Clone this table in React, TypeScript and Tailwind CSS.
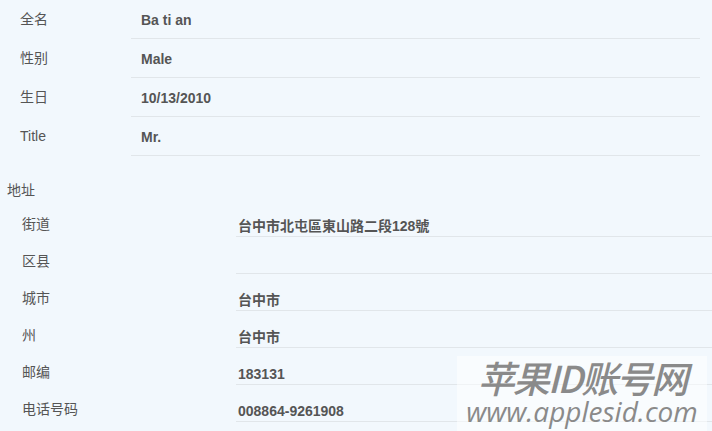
import React from 'react';

const font = { fontFamily: '"Liberation Sans", "Noto Sans CJK SC", Arial, sans-serif' };

const basic = [
  { label: '全名', value: 'Ba ti an' },
  { label: '性别', value: 'Male' },
  { label: '生日', value: '10/13/2010' },
  { label: 'Title', value: 'Mr.' },
];

const address = [
  { label: '街道', value: '台中市北屯區東山路二段128號' },
  { label: '区县', value: '' },
  { label: '城市', value: '台中市' },
  { label: '州', value: '台中市' },
  { label: '邮编', value: '183131' },
  { label: '电话号码', value: '008864-9261908' },
];

export default function App() {
  return (
    <div className="relative w-[712px] h-[431px] overflow-hidden bg-[#f2f8fd] text-[#555]" style={font}>
      {/* Basic info */}
      <div className="flex flex-col pr-[12px]">
        {basic.map((row) => (
          <div key={row.label} className="flex h-[39px]">
            <div className="w-[131px] shrink-0 pl-[20px] pt-[9px] text-[14px] leading-[20px]">{row.label}</div>
            <div className="flex-1 pl-[10px] pt-[10px] text-[14px] leading-[20px] font-bold border-b border-[#e1e6ea]">
              {row.value}
            </div>
          </div>
        ))}
      </div>

      {/* Address */}
      <div className="pl-[7px] pt-[24px] text-[14px] leading-[20px]">地址</div>
      <div className="flex flex-col">
        {address.map((row) => (
          <div key={row.label} className="flex h-[37px]">
            <div className="w-[236px] shrink-0 pl-[22px] pt-[14px] text-[14px] leading-[20px] text-[#555]">
              <span className="text-[#555]">{row.label}</span>
            </div>
            <div className="flex-1 pl-[2px] pt-[16px] text-[14px] leading-[20px] font-bold border-b border-[#e1e6ea]">
              {row.value}
            </div>
          </div>
        ))}
      </div>

      {/* Watermark */}
      <div className="absolute left-[457px] top-[356px] w-[250px] h-[75px] bg-white/50 flex flex-col items-center pt-[2px]">
        <div className="italic font-medium text-[37px] leading-[38px] text-[#8a8a8a] tracking-[-2px]" style={{ fontFamily: '"Noto Sans CJK SC", sans-serif' }}>
          苹果ID账号网
        </div>
        <div className="italic text-[28px] leading-[30px] text-[#8a8a8a]" style={{ fontFamily: '"Open Sans", "DejaVu Sans", sans-serif' }}>
          www.applesid.com
        </div>
      </div>
    </div>
  );
}
